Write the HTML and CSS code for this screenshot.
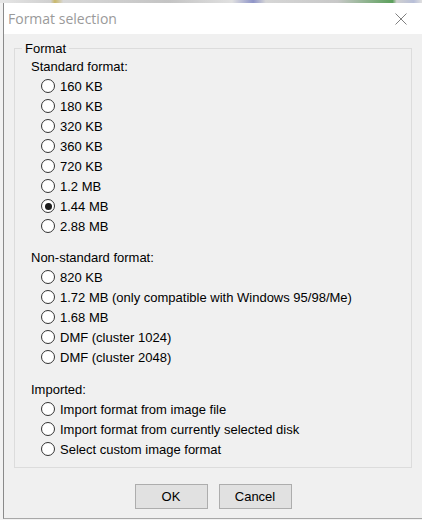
FILE: index.html
```html
<!DOCTYPE html>
<html>
<head>
<meta charset="utf-8">
<title>Format selection</title>
<link rel="stylesheet" href="styles.css">
</head>
<body>
<div class="strip"></div>
<div class="window">
  <div class="titlebar">
    <span class="title">Format selection</span>
    <span class="close">
      <svg width="12" height="12" viewBox="0 0 12 12"><path d="M0.5 0.5 L11.5 11.5 M11.5 0.5 L0.5 11.5" stroke="#808080" stroke-width="1" fill="none"/></svg>
    </span>
  </div>
  <div class="body">
    <fieldset class="group">
      <legend>Format</legend>
      <div class="section first">
        <div class="label">Standard format:</div>
        <div class="row"><span class="radio"></span>160 KB</div>
        <div class="row"><span class="radio"></span>180 KB</div>
        <div class="row"><span class="radio"></span>320 KB</div>
        <div class="row"><span class="radio"></span>360 KB</div>
        <div class="row"><span class="radio"></span>720 KB</div>
        <div class="row"><span class="radio"></span>1.2 MB</div>
        <div class="row"><span class="radio checked"></span>1.44 MB</div>
        <div class="row"><span class="radio"></span>2.88 MB</div>
      </div>
      <div class="section second">
        <div class="label">Non-standard format:</div>
        <div class="row"><span class="radio"></span>820 KB</div>
        <div class="row"><span class="radio"></span>1.72 MB (only compatible with Windows 95/98/Me)</div>
        <div class="row"><span class="radio"></span>1.68 MB</div>
        <div class="row"><span class="radio"></span>DMF (cluster 1024)</div>
        <div class="row"><span class="radio"></span>DMF (cluster 2048)</div>
      </div>
      <div class="section third">
        <div class="label">Imported:</div>
        <div class="row"><span class="radio"></span>Import format from image file</div>
        <div class="row"><span class="radio"></span>Import format from currently selected disk</div>
        <div class="row"><span class="radio"></span>Select custom image format</div>
      </div>
    </fieldset>
    <div class="buttons">
      <button class="btn">OK</button>
      <button class="btn">Cancel</button>
    </div>
  </div>
</div>
</body>
</html>
```
FILE: styles.css
```css
html, body {
  margin: 0;
  padding: 0;
}
body {
  background: #f2f2f2;
  width: 422px;
  height: 520px;
  overflow: hidden;
  font-family: "Liberation Sans", Arial, sans-serif;
  font-size: 13px;
  color: #000;
}
.strip {
  height: 3px;
  background: linear-gradient(to right, #e6e6e6 0, #d0d0d0 12%, #c9b86a 13%, #d8d8d8 15%, #c4c4c4 40%, #e0e0e0 55%, #8f95c8 60%, #d6d6d6 63%, #c8c8c8 80%, #5ca05c 93%, #d0d0d0 94%, #b8bfd8 98%, #e0e0e0 100%);
}
.window {
  margin-left: 3px;
  border-left: 1px solid #8a8a8a;
  border-bottom: 1px solid #a8a8a8;
  background: #f0f0f0;
}
.titlebar {
  height: 31px;
  background: #ffffff;
  display: flex;
  align-items: center;
  justify-content: space-between;
  padding-left: 4px;
}
.title {
  font-family: "Open Sans", "Noto Sans", sans-serif;
  font-size: 14px;
  color: #9a9a9a;
  line-height: 20px;
}
.close {
  width: 42px;
  height: 31px;
  display: flex;
  align-items: center;
  justify-content: center;
}
.body {
  padding: 7px 0 9px 0;
}
.group {
  margin: 0 10px;
  padding: 1px 0 8px 8px;
  border: 1px solid #dcdcdc;
  min-width: 0;
}
.group legend {
  padding: 0 3px;
  margin-left: -1px;
  line-height: 15px;
  font-size: 13px;
}
.section {
  padding-left: 8px;
}
.section.second {
  margin-top: 12px;
}
.section.third {
  margin-top: 13px;
}
.label {
  height: 19px;
  line-height: 19px;
}
.row {
  height: 20px;
  display: flex;
  align-items: center;
  padding-left: 10px;
  line-height: 15px;
  white-space: nowrap;
}
.radio {
  width: 12px;
  height: 12px;
  border: 1px solid #333333;
  border-radius: 50%;
  background: #ffffff;
  margin-right: 5px;
  display: flex;
  align-items: center;
  justify-content: center;
  flex: none;
}
.radio.checked::after {
  content: "";
  width: 7px;
  height: 7px;
  border-radius: 50%;
  background: #1a1a1a;
}
.buttons {
  margin-top: 16px;
  display: flex;
  justify-content: center;
  gap: 11px;
}
.btn {
  width: 73px;
  height: 25px;
  background: #e1e1e1;
  border: 1px solid #adadad;
  border-radius: 0;
  font-family: "Liberation Sans", Arial, sans-serif;
  font-size: 13px;
  color: #000;
  padding: 0;
}
```
